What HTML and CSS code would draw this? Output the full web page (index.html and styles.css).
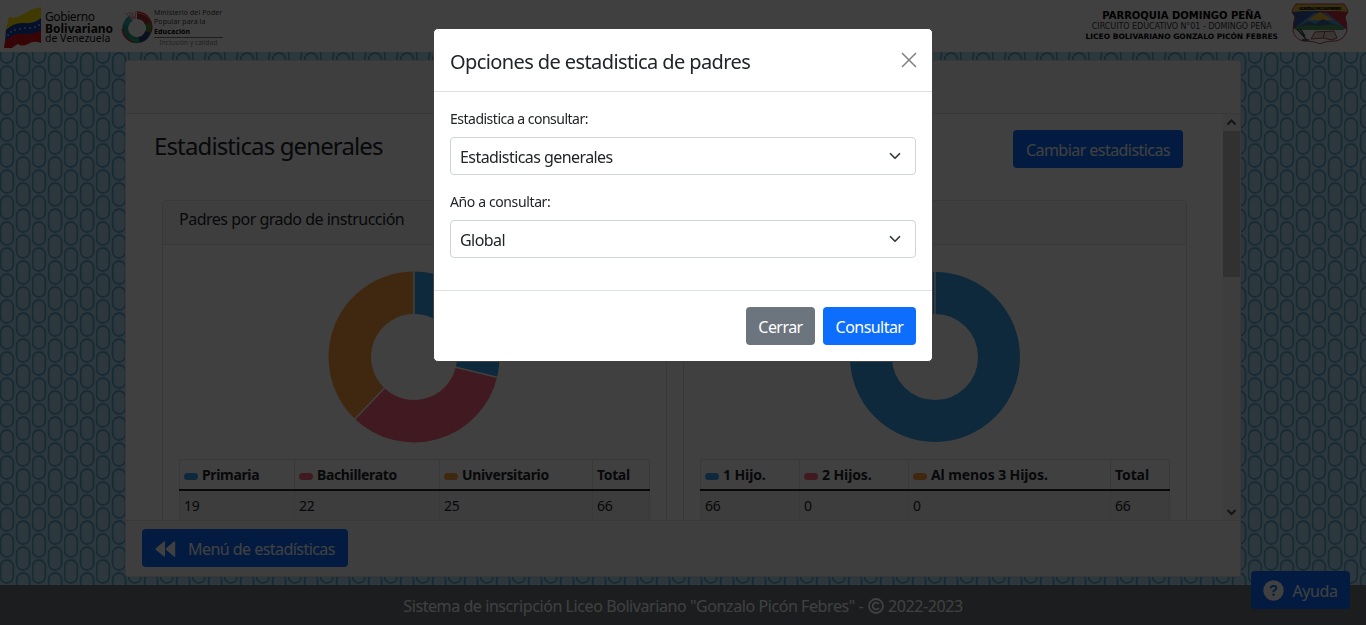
FILE: index.html
```
<!DOCTYPE html>
<html lang="es">
<head>
<meta charset="utf-8">
<title>Estadísticas de padres</title>
<link rel="stylesheet" href="styles.css">
</head>
<body>
<svg class="pattern" aria-hidden="true">
  <defs>
    <pattern id="links" width="32" height="26" patternUnits="userSpaceOnUse">
      <g fill="none" stroke="#62a8cc" stroke-width="1.8">
        <rect x="0.5" y="-12" width="12.8" height="23" rx="6.4"/>
        <rect x="0.5" y="14" width="12.8" height="23" rx="6.4"/>
        <rect x="16.7" y="1" width="12.8" height="23" rx="6.4"/>
      </g>
    </pattern>
  </defs>
  <rect width="100%" height="100%" fill="url(#links)"/>
</svg>
<div class="page">
  <header class="top">
    <div class="brand">
      <svg class="flag" width="38" height="42" viewBox="0 0 38 42">
        <path d="M5 10Q11 12 18 8Q27 2 37 0V12Q30 14 24 17Q14 17 1 26Z" fill="#ffe600"/>
        <path d="M2 23Q10 15 20 16Q30 17 37 11V26Q28 27 20 28Q9 26 1 35Z" fill="#1744b0"/>
        <path d="M1 34Q10 25 20 27Q30 28 37 23V36Q30 33 24 37Q18 40 14 37Q10 39 8 41H0Z" fill="#dc1414"/>
        <g fill="#fff"><circle cx="4" cy="28" r=".8"/><circle cx="7" cy="25" r=".8"/><circle cx="11" cy="23" r=".8"/><circle cx="16" cy="22" r=".8"/><circle cx="21" cy="21" r=".8"/><circle cx="26" cy="21" r=".8"/><circle cx="31" cy="20" r=".8"/><circle cx="35" cy="18" r=".8"/></g>
      </svg>
      <div class="gov"><span class="g1">Gobierno</span><b>Bolivariano</b><span class="g3">de Venezuela</span></div>
      <svg class="ring" width="32" height="33" viewBox="0 0 32 33">
        <g fill="none" stroke-width="6">
          <path d="M16 5A12 12 0 0 1 27 13" stroke="#a83232"/>
          <path d="M27 12A12 12 0 0 1 27 22" stroke="#3c8a3c"/>
          <path d="M27 21A12 12 0 0 1 17 29" stroke="#2c3c78"/>
          <path d="M18 29A12 12 0 0 1 7 25" stroke="#28a878"/>
          <path d="M8 26A12 12 0 0 1 5 13" stroke="#2e9688"/>
          <path d="M5 14A12 12 0 0 1 10 7" stroke="#30b0b0"/>
        </g>
        <path d="M16 1A15 15 0 0 1 30 21M12 31A15 15 0 0 1 1 18" fill="none" stroke="#e02828" stroke-width="1.4"/>
        <path d="M5 2L11 9M8 1L12 8M11 1L13 8M15 0L14 8" fill="none" stroke="#e08080"/>
      </svg>
      <div class="ministry"><span>Ministerio del Poder</span><span>Popular para la</span><b>Educación</b><i>Inclusión y calidad</i></div>
    </div>
    <div class="school">
      <div class="school-text"><b class="l1">PARROQUIA DOMINGO PEÑA</b><span class="l2">CIRCUITO EDUCATIVO N°01 - DOMINGO PEÑA</span><b class="l3">LICEO BOLIVARIANO GONZALO PICÓN FEBRES</b></div>
      <svg class="shield" width="58" height="42" viewBox="0 0 58 42">
        <clipPath id="crest"><path d="M5 1H53Q56 4 57 9L54 14Q56 20 56 27Q54 36 45 38Q34 38 29 41Q23 38 12 38Q4 36 2 28Q2 20 4 14L1 9Q2 4 5 1Z"/></clipPath>
        <g clip-path="url(#crest)">
          <rect width="58" height="42" fill="#fff"/>
          <path d="M0 8H29V26H0Z" fill="#3858a8"/><path d="M29 8H58V26H29Z" fill="#c83040"/>
          <path d="M4 25L23 10H36L54 25Z" fill="#5c9cdc"/>
          <path d="M17 17L29 9L42 17Z" fill="#f0c030"/>
          <path d="M4 25L18 18L24 21L32 16L40 20L54 25Z" fill="#3c6898"/>
          <path d="M3 25Q16 20 29 23Q42 19 55 25L52 27H5Z" fill="#50a060"/>
          <path d="M0 0H58V9Q29 6 0 9Z" fill="#e4c040"/>
        </g>
        <path d="M5 1H53Q56 4 57 9L54 14Q56 20 56 27Q54 36 45 38Q34 38 29 41Q23 38 12 38Q4 36 2 28Q2 20 4 14L1 9Q2 4 5 1Z" fill="none" stroke="#c04058"/>
        <path d="M24 29L43 28L46 35L41 37L32 35L20 36Z" fill="#e8d8d0" stroke="#a04848"/><path d="M34 28L32 35" stroke="#a04848"/>
        <path d="M6 26L15 36M9 26L14 33M11 37H18" stroke="#444" stroke-width="1.3" fill="none"/>
        <text x="29" y="6.5" class="crest-text" text-anchor="middle" textLength="42">GONZALO PICÓN FEBRES</text>
      </svg>
    </div>
  </header>

  <main class="panel">
    <div class="panel-head"></div>
    <div class="panel-body">
      <div class="scroll">
        <div class="title-row"><h1>Estadisticas generales</h1><button class="btn primary">Cambiar estadisticas</button></div>
        <div class="cards">
          <section class="card">
            <div class="card-head">Padres por grado de instrucción</div>
            <div class="card-body">
              <svg class="donut left" width="172" height="172" viewBox="-86 -86 172 172">
                <path d="M0-85.5A85.5 85.5 0 0 1 83.1 20.2L41.8 10.2A43 43 0 0 0 0-43Z" fill="#36a2eb"/>
                <path d="M83.1 20.2A85.5 85.5 0 0 1-59 61.9L-29.7 31.1A43 43 0 0 0 41.8 10.2Z" fill="#ff6384"/>
                <path d="M-59 61.9A85.5 85.5 0 0 1 0-85.5V-43A43 43 0 0 0-29.7 31.1Z" fill="#ff9f40"/>
                <path d="M0-86V-42M84 20.4L41 10M-59.5 62.4L-29 30.4" fill="none" stroke="#fff" stroke-width="1.5"/>
              </svg>
              <table class="data first">
                <colgroup><col class="a1"><col class="a2"><col class="a3"><col></colgroup>
                <tr><th><i class="dot blue"></i>Primaria</th><th><i class="dot pink"></i>Bachillerato</th><th><i class="dot orange"></i>Universitario</th><th>Total</th></tr>
                <tr class="values"><td>19</td><td>22</td><td>25</td><td>66</td></tr>
              </table>
            </div>
          </section>
          <section class="card">
            <div class="card-head">Padres por número de hijos</div>
            <div class="card-body">
              <svg class="donut" width="172" height="172" viewBox="-86 -86 172 172">
                <circle r="64" fill="none" stroke="#36a2eb" stroke-width="42"/>
                <path d="M0-86V-42" stroke="#fff" stroke-width="1.5"/>
              </svg>
              <table class="data second">
                <colgroup><col class="b1"><col class="b2"><col class="b3"><col></colgroup>
                <tr><th><i class="dot blue"></i>1 Hijo.</th><th><i class="dot pink"></i>2 Hijos.</th><th><i class="dot orange"></i>Al menos 3 Hijos.</th><th>Total</th></tr>
                <tr class="values"><td>66</td><td>0</td><td>0</td><td>66</td></tr>
              </table>
            </div>
          </section>
        </div>
      </div>
      <div class="bar">
        <svg width="17" height="17" viewBox="0 0 17 17"><path d="M4.5 10.5L8.5 6.5L12.5 10.5" fill="none" stroke="#505050" stroke-width="2"/></svg>
        <div class="thumb"></div>
        <svg class="down" width="17" height="17" viewBox="0 0 17 17"><path d="M4.5 7L8.5 11L12.5 7" fill="none" stroke="#505050" stroke-width="2"/></svg>
      </div>
    </div>
    <div class="panel-foot">
      <button class="btn primary"><svg class="back" width="21" height="16" viewBox="0 0 21 16"><path d="M9 .5Q10 0 10 1V15Q10 16 9 15.5L.8 8.8Q0 8 .8 7.2ZM19 .5Q20.2 0 20.2 1V15Q20.2 16 19 15.5L11 8.8Q10.3 8 11 7.2Z" fill="#fff"/></svg>Menú de estadísticas</button>
    </div>
  </main>
  <footer class="footer"><span>Sistema de inscripción Liceo Bolivariano "Gonzalo Picón Febres" - </span><svg width="16" height="16" viewBox="0 0 16 16"><circle cx="8" cy="8" r="7" fill="none" stroke="#fff" stroke-width="1.8"/><path d="M10.8 6A3.4 3.4 0 1 0 10.8 10" fill="none" stroke="#fff" stroke-width="1.8"/></svg><span>2022-2023</span></footer>
</div>
<button class="btn primary help"><svg width="21" height="21" viewBox="0 0 21 21"><circle cx="10.5" cy="10.5" r="10.2" fill="#fff"/><path d="M7.5 8.2Q8 5.9 10.6 5.9Q13.4 6 13.3 8.3Q13.2 9.8 10.6 11V12.2" fill="none" stroke="#0d6efd" stroke-width="1.9"/><circle cx="10.5" cy="14.7" r="1.2" fill="#0d6efd"/></svg>Ayuda</button>

<div class="backdrop">
  <div class="modal" role="dialog">
    <div class="modal-head"><h2>Opciones de estadistica de padres</h2><svg class="close" width="16" height="16" viewBox="0 0 16 16"><path d="M1 1L15 15M15 1L1 15" stroke="#808080" stroke-width="1.5" fill="none"/></svg></div>
    <div class="modal-body">
      <label>Estadistica a consultar:</label>
      <div class="select"><span>Estadisticas generales</span><svg width="16" height="12" viewBox="0 0 16 16"><path d="M2 5l6 6 6-6" fill="none" stroke="#343a40" stroke-width="2.3" stroke-linecap="round" stroke-linejoin="round"/></svg></div>
      <label class="year">Año a consultar:</label>
      <div class="select"><span>Global</span><svg width="16" height="12" viewBox="0 0 16 16"><path d="M2 5l6 6 6-6" fill="none" stroke="#343a40" stroke-width="2.3" stroke-linecap="round" stroke-linejoin="round"/></svg></div>
    </div>
    <div class="modal-foot"><button class="btn secondary">Cerrar</button><button class="btn primary">Consultar</button></div>
  </div>
</div>
</body>
</html>
```
FILE: styles.css
```
* { box-sizing: border-box; }
body { margin: 0; height: 625px; overflow: hidden; background: #b0dff2; color: #212529; font: 16px/24px "Segoe UI", "Noto Sans", "Open Sans", sans-serif; letter-spacing: -0.5px; }
h1, h2 { margin: 0; font-weight: 400; }
.pattern { position: absolute; z-index: -1; inset: 0; width: 100%; height: 100%; }
.page { display: flex; flex-direction: column; height: 625px; }
.top { height: 52px; flex: none; background: #fff; display: flex; justify-content: space-between; }
.brand { display: flex; color: #111; }
.flag { margin: 7px 0 0 4px; }
.gov { margin: 11px 0 0 3px; width: 76px; display: flex; flex-direction: column; font: 12px/12px "Noto Sans", sans-serif; letter-spacing: -0.4px; white-space: nowrap; }
.gov b { font-size: 12px; line-height: 11px; letter-spacing: 0; }
.gov .g3 { font-size: 10.5px; line-height: 9px; letter-spacing: 0; }
.ring { margin: 11px 0 0; }
.ministry { margin: 8px 0 0 1px; display: flex; flex-direction: column; font: 7px/9.3px "Noto Sans", sans-serif; color: #444; letter-spacing: 0.1px; white-space: nowrap; width: 69px; }
.ministry b { color: #000; }
.ministry i { border-top: 1px solid #777; margin-top: 1px; font-style: normal; font-size: 6.5px; line-height: 10px; color: #888; text-align: center; }
.school { display: flex; }
.school-text { display: flex; flex-direction: column; align-items: center; margin: 9px 13px 0 0; color: #000; font-family: "DejaVu Sans", sans-serif; letter-spacing: 0; white-space: nowrap; }
.l1 { font-size: 10px; line-height: 13px; }
.l2 { font-size: 8px; line-height: 10px; letter-spacing: -0.05px; color: #333; }
.l3 { font-size: 7.5px; line-height: 10px; }
.shield { margin: 3px 17px 0 0; }
.crest-text { font: bold 4px "DejaVu Sans", sans-serif; }
.panel { width: 1116px; height: 517px; margin: 8px 0 0 125px; border: 1px solid #dfdfdf; border-radius: 4px; background: #fff; display: flex; flex-direction: column; overflow: hidden; flex: none; }
.panel-head { height: 53px; background: #f7f7f7; border-bottom: 1px solid #dfdfdf; flex: none; }
.panel-body { height: 406px; display: flex; flex: none; }
.scroll { width: 1097px; overflow: hidden; flex: none; }
.title-row { display: flex; justify-content: space-between; padding: 16px 40px 0 28px; height: 86px; }
.title-row h1 { font-size: 24px; line-height: 32px; letter-spacing: -0.87px; }
.cards { display: flex; gap: 16px; padding-left: 36px; }
.card { width: 505px; height: 380px; border: 1px solid #dfdfdf; border-radius: 4px; }
.card + .card { width: 504px; }
.card-head { height: 44px; padding: 6px 16px; background: #f7f7f7; border-bottom: 1px solid #dfdfdf; }
.card-body { padding: 26px 16px; display: flex; flex-direction: column; align-items: center; }
.donut { display: block; }
.donut.left { margin-right: 1px; }
.data { margin-top: 16px; border-collapse: collapse; table-layout: fixed; width: 471px; font-size: 14px; line-height: 21px; letter-spacing: -0.2px; }
.data th, .data td { border: 1px solid #dee2e6; padding: 4px; text-align: left; height: 30px; white-space: nowrap; }
.data th { letter-spacing: -0.35px; border-bottom: 2px solid #212529; }
.data.second { width: 470px; }
.data.second th { letter-spacing: -0.1px; }
.values { background: #f2f2f2; }
.a1 { width: 115px; } .a2 { width: 145px; } .a3 { width: 153px; }
.b1 { width: 99px; } .b2 { width: 109px; } .b3 { width: 202px; }
.dot { display: inline-block; width: 14px; height: 7px; border-radius: 4px; margin-right: 4px; }
.blue { background: #36a2eb; } .pink { background: #ff6384; } .orange { background: #ff9f40; }
.bar { width: 17px; background: #f1f1f1; display: flex; flex-direction: column; }
.thumb { height: 146px; background: #c1c1c1; }
.down { margin-top: auto; }
.panel-foot { flex: 1; background: #f7f7f7; border-top: 1px solid #dfdfdf; padding: 8px 16px; }
.btn { height: 38px; border: 0; border-radius: 4px; padding: 2px 12px 0; color: #fff; font: inherit; letter-spacing: -0.55px; display: flex; align-items: center; justify-content: center; white-space: nowrap; }
.primary { background: #0d6efd; }
.secondary { background: #6c757d; }
.title-row .btn { width: 170px; }
.panel-foot .btn { width: 206px; }
.back { margin: -1px 12px 0 0; }
.footer { margin-top: auto; height: 40px; background: #6c757d; color: #fff; display: flex; justify-content: center; align-items: center; gap: 4px; padding-top: 2px; white-space: pre; letter-spacing: -0.42px; }
.footer svg { margin: -1px 0 0 -3px; }
.help { position: fixed; right: 16px; bottom: 16px; width: 99px; letter-spacing: -0.4px; }
.help svg { margin: -2px 8px 0 0; }
.backdrop { position: fixed; inset: 0; background: rgba(0, 0, 0, .75); display: flex; align-items: flex-start; justify-content: center; padding-top: 28px; }
.modal { width: 500px; height: 334px; background: #fff; border: 1px solid #404040; border-radius: 5px; display: flex; flex-direction: column; overflow: hidden; }
.modal-head { height: 63px; border-bottom: 1px solid #dee2e6; padding: 3px 15px 0 16px; display: flex; align-items: center; justify-content: space-between; flex: none; }
.modal-head h2 { font-size: 20px; line-height: 30px; letter-spacing: -0.6px; }
.close { margin-top: -3px; }
.modal-body { height: 199px; padding: 16px; flex: none; border-bottom: 1px solid #dee2e6; }
.modal-body label { display: block; font-size: 14px; line-height: 21px; height: 29px; letter-spacing: -0.5px; }
.modal-body .year { letter-spacing: -0.38px; }
.select { height: 38px; border: 1px solid #ced4da; border-radius: 4px; display: flex; align-items: center; justify-content: space-between; padding: 2px 12px 0 9px; margin-bottom: 16px; letter-spacing: -0.57px; }
.select svg { margin-top: -2px; }
.modal-foot { flex: 1; padding: 16px; display: flex; justify-content: flex-end; gap: 8px; }
.modal-foot .secondary { width: 69px; }
.modal-foot .primary { width: 93px; }
```
